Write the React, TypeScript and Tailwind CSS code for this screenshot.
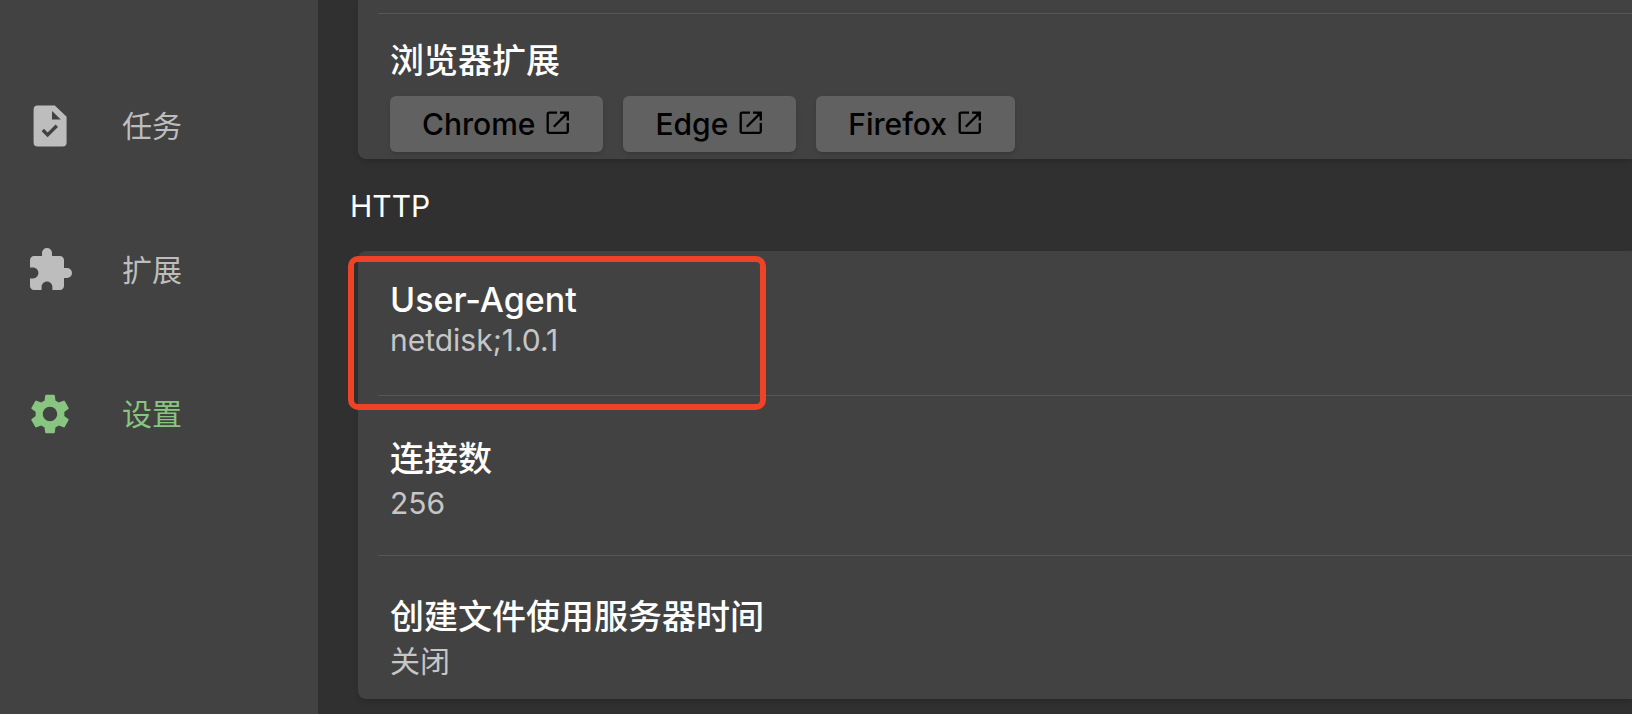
import type { ReactNode } from "react";
import { MdExtension, MdSettings } from "react-icons/md";

function TaskIcon() {
  return (
    <svg viewBox="0 0 24 24" className="size-12" fill="currentColor" aria-hidden="true">
      <path
        fillRule="evenodd"
        d="M5.8 1.7h8.6l5.9 5.7v12.8a2 2 0 0 1-2 2H5.8a2 2 0 0 1-2-2V3.7a2 2 0 0 1 2-2zM13 4.5v4.2h4.4zM9 13.4l-1.2 1.2 3 3 5.2-5.1-1.2-1.2-4 3.9z"
      />
    </svg>
  );
}

function LaunchIcon() {
  return (
    <svg viewBox="0 0 24 24" className="mb-[2px] size-6" fill="none" stroke="currentColor" strokeWidth="2.3" aria-hidden="true">
      <path d="M11 1.7H3.3a1.6 1.6 0 0 0-1.6 1.6v16.9a1.6 1.6 0 0 0 1.6 1.6h16.9a1.6 1.6 0 0 0 1.6-1.6V12" />
      <path d="M14 1.7h7.8V9.500M21.4 2.1 7.8 15.700" />
      <path d="M17 2h5v5z" fill="currentColor" stroke="none" />
    </svg>
  );
}

function NavItem({ icon, label, active = false }: { icon: ReactNode; label: string; active?: boolean }) {
  return (
    <a
      href="#"
      aria-current={active ? "page" : undefined}
      className={`flex h-36 items-center gap-12 pl-[26px] ${active ? "text-[#88c581]" : "text-[#bdbdbd]"}`}
    >
      {icon}
      <span className="text-[30px] leading-10">{label}</span>
    </a>
  );
}

function LinkButton({ label }: { label: string }) {
  return (
    <button type="button" className="flex h-14 items-center gap-[11px] rounded-md bg-[#616161] pr-[33px] pl-8 text-[30px] font-medium text-black shadow-md">
      {label}
      <LaunchIcon />
    </button>
  );
}

function Setting({ title, value, className }: { title: string; value: string; className: string }) {
  return (
    <div className={`flex flex-col px-8 ${className}`}>
      <h3 className="text-[34px] leading-10 font-[450] text-white">{title}</h3>
      <p className="text-[30px] leading-10 text-[#c6c6c6]">{value}</p>
    </div>
  );
}

function Divider() {
  return <hr className="ml-5 border-t border-[#575757]" />;
}

export default function App() {
  return (
    <div className="flex min-h-screen bg-[#303030] font-['Inter','Noto_Sans_CJK_SC',sans-serif]">
      <nav className="w-[318px] shrink-0 bg-[#424242] pt-[54px]">
        <NavItem icon={<TaskIcon />} label="任务" />
        <NavItem icon={<MdExtension className="size-12" />} label="扩展" />
        <NavItem icon={<MdSettings className="size-12" />} label="设置" active />
      </nav>
      <main className="min-w-0 grow pl-10">
        <section className="rounded-bl-lg bg-[#424242] pt-[13px] shadow-md">
          <Divider />
          <div className="px-8 pt-[27px] pb-[7px]">
            <h3 className="text-[34px] leading-10 font-[450] text-white">浏览器扩展</h3>
            <div className="mt-[15px] flex gap-5">
              <LinkButton label="Chrome" />
              <LinkButton label="Edge" />
              <LinkButton label="Firefox" />
            </div>
          </div>
        </section>
        <h2 className="-ml-2 pt-[27px] pb-[25px] text-[30px] leading-10 text-white">HTTP</h2>
        <section className="relative rounded-l-lg bg-[#424242] shadow-md">
          <Setting title="User-Agent" value="netdisk;1.0.1" className="pt-[29px] pb-[35px]" />
          <Divider />
          <Setting title="连接数" value="256" className="gap-1 pt-[43px] pb-8" />
          <Divider />
          <Setting title="创建文件使用服务器时间" value="关闭" className="gap-1 pt-[41px] pb-[18px]" />
          <div className="pointer-events-none absolute top-[5px] -left-[10px] h-[154px] w-[418px] rounded-[10px] border-[6px] border-[#ee4327]" />
        </section>
      </main>
    </div>
  );
}
